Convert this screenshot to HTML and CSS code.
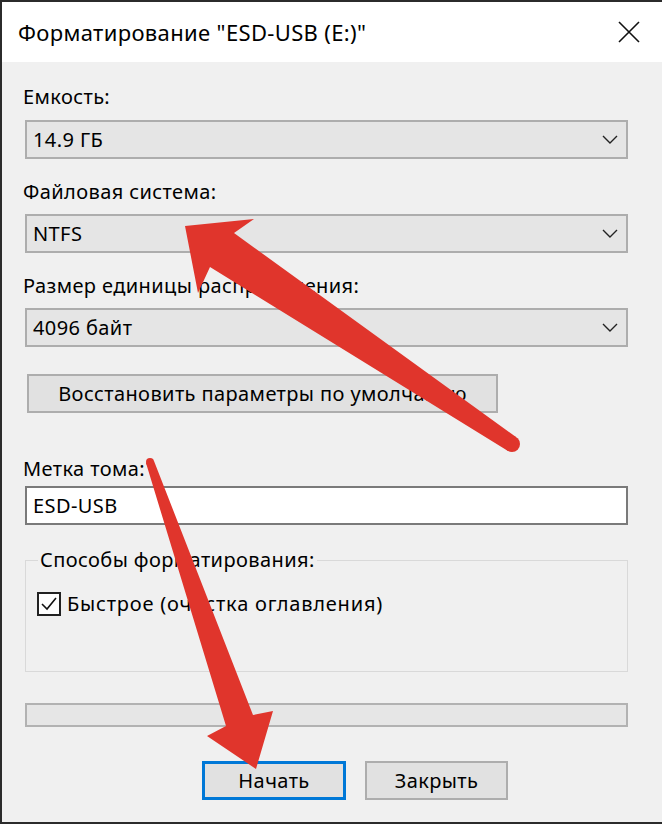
FILE: index.html
```html
<!DOCTYPE html>
<html lang="ru">
<head>
<meta charset="utf-8">
<title>Форматирование</title>
<link rel="stylesheet" href="styles.css">
</head>
<body>
<div class="window">
  <div class="titlebar">
    <span class="title">Форматирование "ESD-USB (E:)"</span>
    <svg class="close" width="22" height="22" viewBox="0 0 22 22"><path d="M1 1 L21 21 M21 1 L1 21" stroke="#111" stroke-width="1.6" fill="none"/></svg>
  </div>
  <div class="content">
    <div class="label first">Емкость:</div>
    <div class="combo"><span>14.9 ГБ</span><svg class="chev" width="16" height="9" viewBox="0 0 16 9"><path d="M1 1 L8 8 L15 1" stroke="#222" stroke-width="1.4" fill="none"/></svg></div>
    <div class="label">Файловая система:</div>
    <div class="combo"><span>NTFS</span><svg class="chev" width="16" height="9" viewBox="0 0 16 9"><path d="M1 1 L8 8 L15 1" stroke="#222" stroke-width="1.4" fill="none"/></svg></div>
    <div class="label">Размер единицы распределения:</div>
    <div class="combo"><span>4096 байт</span><svg class="chev" width="16" height="9" viewBox="0 0 16 9"><path d="M1 1 L8 8 L15 1" stroke="#222" stroke-width="1.4" fill="none"/></svg></div>
    <div class="btn restore">Восстановить параметры по умолчанию</div>
    <div class="label vol">Метка тома:</div>
    <div class="textbox">ESD-USB</div>
    <fieldset class="group">
      <legend>Способы форматирования:</legend>
      <div class="check">
        <span class="box"><svg width="20" height="20" viewBox="0 0 20 20"><path d="M3 10 L8 15 L17 4" stroke="#111" stroke-width="1.6" fill="none"/></svg></span>
        <span class="check-text">Быстрое (очистка оглавления)</span>
      </div>
    </fieldset>
    <div class="progress"></div>
    <div class="actions">
      <div class="btn primary">Начать</div>
      <div class="btn">Закрыть</div>
    </div>
  </div>
  <svg class="arrows" width="662" height="826" viewBox="0 0 662 826">
    <g fill="#e0352c">
      <polygon points="185,226 254,219 234,233 516,437 508,451 210,267 198,293"/>
      <circle cx="512" cy="444" r="8"/>
      <polygon points="146,463 154,461 253,715 273,711 256,769 207,736 226,726"/>
      <circle cx="150" cy="462" r="4"/>
    </g>
  </svg>
</div>
</body>
</html>
```

FILE: styles.css
```css
html, body {
  margin: 0;
  padding: 0;
  background: #ffffff;
}
body {
  font-family: "Noto Sans", "Liberation Sans", sans-serif;
  color: #000;
  font-size: 20px;
  letter-spacing: 0.4px;
}
.window {
  position: relative;
  width: 660px;
  height: 820px;
  border-left: 2px solid #2b2b2b;
  border-top: 2px solid #2b2b2b;
  border-bottom: 2px solid #2b2b2b;
  background: #f0f0f0;
}
.titlebar {
  height: 60px;
  background: #ffffff;
  display: flex;
  align-items: center;
  justify-content: space-between;
  padding: 0 22px 0 16px;
}
.title {
  font-size: 22px;
  letter-spacing: 0.35px;
}
.close {
  display: block;
}
.content {
  padding: 0 32px 0 23px;
  display: flex;
  flex-direction: column;
  align-items: flex-start;
}
.label {
  line-height: 24px;
  margin-top: 21px;
  margin-bottom: 10px;
  margin-left: -2px;
}
.label.first {
  margin-top: 23px;
  margin-bottom: 11px;
}
.combo {
  box-sizing: border-box;
  width: 603px;
  height: 39px;
  border: 2px solid #adadad;
  background: #e5e5e5;
  display: flex;
  align-items: center;
  justify-content: space-between;
  padding: 0 8px 0 6px;
}
.btn {
  box-sizing: border-box;
  height: 39px;
  border: 2px solid #adadad;
  background: #e1e1e1;
  display: flex;
  align-items: center;
  justify-content: center;
}
.restore {
  width: 471px;
  margin-top: 27px;
  margin-left: 2px;
}
.label.vol {
  margin-top: 44px;
  margin-bottom: 5px;
}
.textbox {
  box-sizing: border-box;
  width: 603px;
  height: 39px;
  border: 2px solid #7a7a7a;
  background: #ffffff;
  display: flex;
  align-items: center;
  padding-left: 6px;
}
.group {
  box-sizing: border-box;
  width: 603px;
  height: 124px;
  margin: 23px 0 0 0;
  padding: 18px 12px 0 11px;
  border: 1px solid #d9d9d9;
  min-inline-size: 0;
}
.group legend {
  padding: 0 2px;
  margin-left: 1px;
  line-height: 24px;
}
.check {
  display: flex;
  align-items: center;
  gap: 6px;
}
.check-text {
  letter-spacing: 0.8px;
}
.box {
  box-sizing: border-box;
  width: 24px;
  height: 24px;
  border: 2px solid #222;
  background: #ffffff;
  display: flex;
  align-items: center;
  justify-content: center;
}
.box svg {
  display: block;
}
.progress {
  box-sizing: border-box;
  width: 603px;
  height: 24px;
  margin-top: 31px;
  border: 2px solid #b2b2b2;
  background: #e6e6e6;
}
.actions {
  display: flex;
  gap: 19px;
  margin-top: 34px;
  margin-left: 177px;
}
.actions .btn {
  width: 143px;
}
.actions .btn.primary {
  width: 144px;
  border: 3px solid #0078d7;
}
.arrows {
  position: absolute;
  left: -2px;
  top: -2px;
  pointer-events: none;
}
```
